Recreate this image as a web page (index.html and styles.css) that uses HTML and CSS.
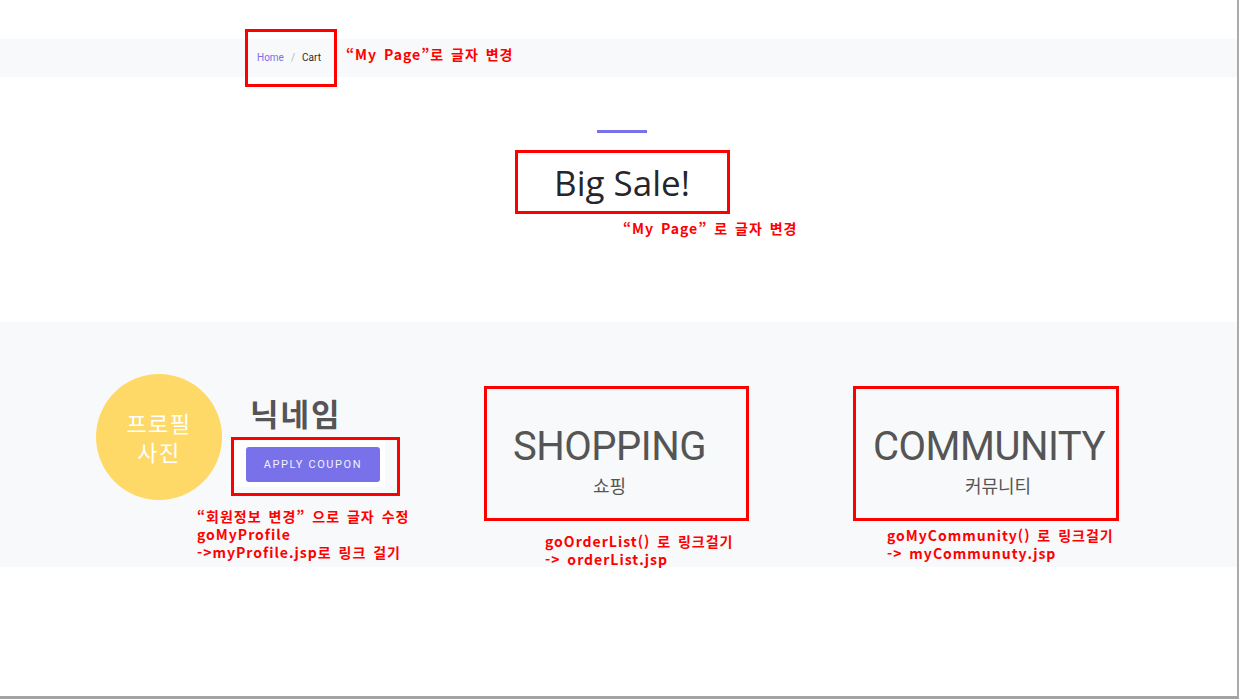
FILE: index.html
```html
<!DOCTYPE html>
<html lang="ko">
<head>
<meta charset="utf-8">
<title>My Page</title>
<link rel="stylesheet" href="styles.css">
</head>
<body>
<div class="page">
  <div class="bread-band">
    <div class="bread-row">
      <div class="crumbs">
        <span class="crumb-home">Home</span><span class="crumb-sep">/</span><span class="crumb-cur">Cart</span>
      </div>
      <div class="note note-bread">“My Page”로 글자 변경</div>
    </div>
  </div>

  <section class="hero">
    <div class="hero-line"></div>
    <h2 class="hero-title">Big Sale!</h2>
    <div class="note hero-note">“My Page” 로 글자 변경</div>
  </section>

  <section class="menu">
    <div class="profile">
      <div class="profile-top">
        <div class="avatar"><span>프로필</span><span>사진</span></div>
        <div class="profile-info">
          <div class="nick">닉네임</div>
          <div class="btn-frame">
            <div class="btn-white"><button class="btn">APPLY COUPON</button></div>
          </div>
        </div>
      </div>
      <div class="note note-profile">“회원정보 변경” 으로 글자 수정<br>goMyProfile<br>-&gt;myProfile.jsp로 링크 걸기</div>
    </div>

    <div class="col col-shop">
      <div class="tile tile-shop">
        <div class="tile-title">SHOPPING</div>
        <div class="tile-sub">쇼핑</div>
      </div>
      <div class="note note-shop">goOrderList() 로 링크걸기<br>-&gt; orderList.jsp</div>
    </div>

    <div class="col col-comm">
      <div class="tile tile-comm">
        <div class="tile-title">COMMUNITY</div>
        <div class="tile-sub sub-comm">커뮤니티</div>
      </div>
      <div class="note note-comm">goMyCommunity() 로 링크걸기<br>-&gt; myCommunuty.jsp</div>
    </div>
  </section>
</div>
</body>
</html>
```

FILE: styles.css
```css
* { box-sizing: border-box; }

html, body {
  margin: 0;
  padding: 0;
  background: #ffffff;
}

.page {
  width: 1239px;
  height: 699px;
  overflow: hidden;
  border-right: 2px solid #ababab;
  border-bottom: 3px solid #a3a3a3;
  font-family: "Noto Sans", "Noto Sans CJK KR", sans-serif;
}

/* annotations */
.note {
  font-family: "Noto Sans CJK KR", sans-serif;
  font-weight: 700;
  font-size: 14px;
  line-height: 18px;
  letter-spacing: 1px;
  word-spacing: 2px;
  color: #ff0000;
  white-space: nowrap;
}

/* breadcrumb */
.bread-band {
  margin-top: 39px;
  height: 38px;
  background: #f8f9fa;
}

.bread-row {
  height: 38px;
  display: flex;
  align-items: center;
  padding-left: 257px;
}

.crumbs {
  position: relative;
  font-family: Roboto, "Noto Sans", sans-serif;
  font-size: 10px;
  line-height: 14px;
  display: flex;
  align-items: center;
}

.crumbs::after {
  content: "";
  position: absolute;
  left: -12px;
  right: -16px;
  top: -22px;
  bottom: -22px;
  border: 3px solid #ff0000;
}

.crumb-home { color: #7971ea; }
.crumb-sep { color: #b5b5b5; margin: 0 7px; }
.crumb-cur { color: #2b2b2b; }

.note-bread {
  align-self: flex-start;
  margin-top: 6px;
  margin-left: 25px;
}

/* hero */
.hero {
  height: 245px;
  display: flex;
  flex-direction: column;
  align-items: center;
  padding-left: 7px;
}

.hero-line {
  margin-top: 53px;
  width: 50px;
  height: 3px;
  background: #7971ea;
}

.hero-title {
  margin: 17px 0 0;
  width: 215px;
  height: 64px;
  border: 3px solid #ff0000;
  display: flex;
  align-items: center;
  justify-content: center;
  font-family: "Open Sans", "Noto Sans", sans-serif;
  font-weight: 400;
  font-size: 35px;
  color: #25262b;
}

.hero-note {
  align-self: stretch;
  padding-left: calc(50% + 1px);
  margin-top: 5px;
}

/* menu section */
.menu {
  height: 245px;
  background: #f8f9fa;
  display: flex;
  align-items: flex-start;
  padding-left: 96px;
}

.profile {
  width: 388px;
  display: flex;
  flex-direction: column;
}

.profile-top {
  margin-top: 52px;
  display: flex;
  align-items: flex-start;
}

.avatar {
  width: 126px;
  height: 126px;
  border-radius: 50%;
  background: #fed967;
  color: #ffffff;
  font-family: "Noto Sans CJK KR", sans-serif;
  font-size: 22px;
  line-height: 29px;
  letter-spacing: 1.5px;
  display: flex;
  flex-direction: column;
  align-items: center;
  justify-content: center;
  text-align: center;
}

.profile-info {
  margin-left: 9px;
  margin-top: 21px;
  display: flex;
  flex-direction: column;
  align-items: flex-start;
}

.nick {
  padding-left: 19px;
  font-family: "Noto Sans CJK KR", sans-serif;
  font-weight: 700;
  font-size: 31px;
  line-height: 36px;
  letter-spacing: 2px;
  color: #555555;
}

.btn-frame {
  margin-top: 6px;
  width: 169px;
  height: 59px;
  border: 3px solid #ff0000;
  padding: 0 12px 6px 0;
}

.btn-white {
  background: #ffffff;
  height: 100%;
  padding: 7px 5px 5px 12px;
}

.btn {
  display: block;
  width: 134px;
  height: 35px;
  border: 0;
  border-radius: 3px;
  background: #7971ea;
  color: #f2f2ff;
  font-family: Roboto, "Noto Sans", sans-serif;
  font-size: 11px;
  letter-spacing: 1.6px;
  padding: 0;
}

.note-profile {
  margin-top: 7px;
  margin-left: 101px;
}

.col {
  display: flex;
  flex-direction: column;
  align-items: flex-start;
}

.col-shop { width: 369px; }

.tile {
  margin-top: 64px;
  height: 135px;
  border: 3px solid #ff0000;
  display: flex;
  flex-direction: column;
  align-items: center;
  padding-top: 34px;
}

.tile-shop { width: 265px; padding-right: 14px; }
.tile-comm { width: 266px; padding-left: 6px; }

.tile-title {
  font-family: Roboto, "Noto Sans", sans-serif;
  font-size: 40px;
  line-height: 48px;
  letter-spacing: -0.5px;
  color: #555555;
}

.tile-sub {
  margin-top: 2px;
  font-family: "Noto Sans CJK KR", sans-serif;
  font-size: 18px;
  line-height: 24px;
  color: #555555;
}

.sub-comm { margin-left: 18px; }

.note-shop {
  margin-top: 11px;
  margin-left: 61px;
}

.note-comm {
  margin-top: 5px;
  margin-left: 34px;
}
```
